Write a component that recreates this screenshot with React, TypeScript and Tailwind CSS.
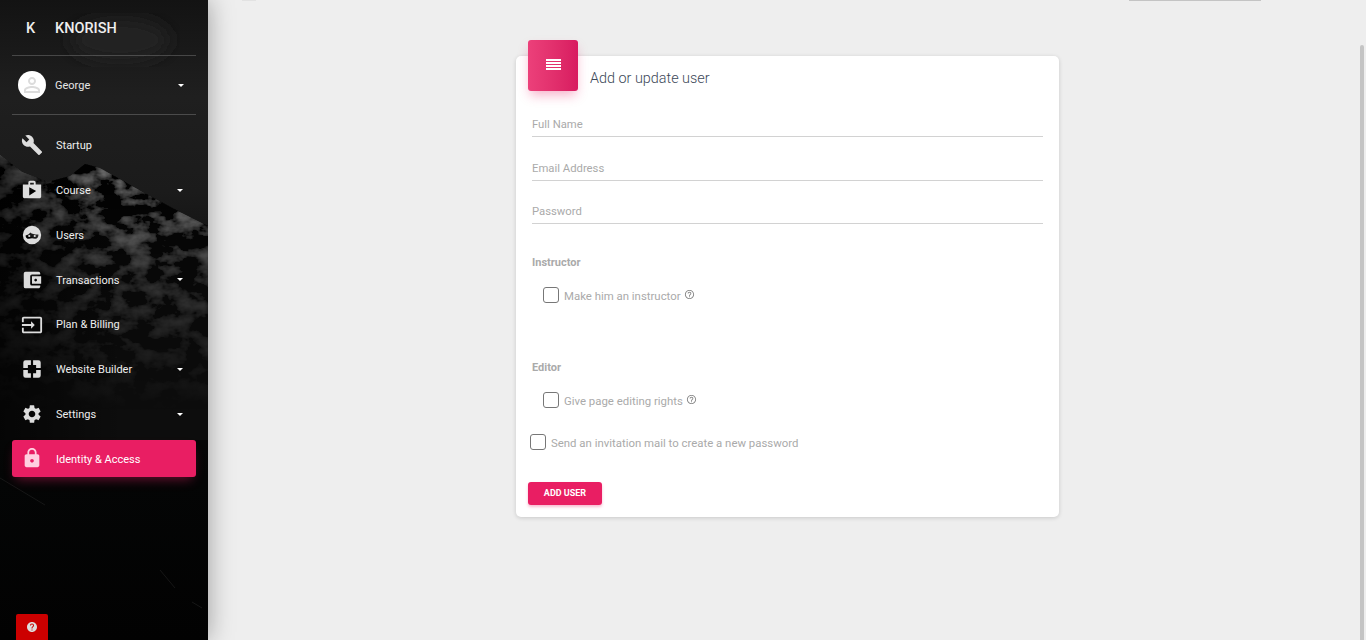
import React from 'react';
import {
  MdBuild,
  MdShop,
  MdAccountBalanceWallet,
  MdInput,
  MdSettings,
  MdLock,
  MdHelp,
  MdHelpOutline,
  MdPersonOutline,
} from 'react-icons/md';

const NAV_ITEMS = [
  { label: 'Startup', icon: <MdBuild size={22} />, caret: false },
  { label: 'Course', icon: <MdShop size={22} />, caret: true },
  { label: 'Users', icon: <FaceIcon />, caret: false },
  { label: 'Transactions', icon: <MdAccountBalanceWallet size={22} />, caret: true },
  { label: 'Plan & Billing', icon: <MdInput size={22} />, caret: false },
  { label: 'Website Builder', icon: <BuilderIcon />, caret: true },
  { label: 'Settings', icon: <MdSettings size={22} />, caret: true },
];

function FaceIcon() {
  return (
    <svg width="22" height="22" viewBox="0 0 24 24" fill="currentColor">
      <path
        fillRule="evenodd"
        d="M12 2a10 10 0 1 0 0 20 10 10 0 0 0 0-20zM5 12.500c2.200-.4 4-1.500 5.200-3.200 1.500 1.500 4.500 2.200 8.800 2.200.3 2.300-1.200 4.700-3.500 4.700-1.300 0-2.500-.6-3.500-.6s-2.200.6-3.500.6C6.500 16.200 5 14.800 5 12.500z"
      />
      <circle cx="9" cy="13.100" r="1.200" />
      <circle cx="15" cy="13.100" r="1.200" />
    </svg>
  );
}

function BuilderIcon() {
  return (
    <svg width="22" height="22" viewBox="0 0 24 24" fill="currentColor">
      <path
        fillRule="evenodd"
        d="M5 2.500h14A2.500 2.500 0 0 1 21.500 5v14a2.500 2.500 0 0 1-2.500 2.500H5A2.500 2.500 0 0 1 2.500 19V5A2.500 2.500 0 0 1 5 2.500zM10.800 2.500v5H7.500v3.300h-5v2.400h5v3.300h3.300v5h2.400v-5h3.300v-3.300h5v-2.400h-5V7.500h-3.300v-5z"
      />
    </svg>
  );
}

function HeadlineIcon() {
  return (
    <svg width="15" height="11" viewBox="0 0 15 11" fill="currentColor" className="-mt-[2px]">
      <rect y="0" width="15" height="2" />
      <rect y="3" width="15" height="2" />
      <rect y="6" width="15" height="2" />
      <rect y="9" width="15" height="2" />
    </svg>
  );
}

function Caret() {
  return <span className="h-0 w-0 border-x-[3px] border-t-[3px] border-x-transparent border-t-white" />;
}

// mountain backdrop behind the sidebar menu
function SidebarBackdrop() {
  const ridge = 'M0 155 L22 172 L48 182 L70 176 L85 164 L100 168 L125 182 L150 196 L180 212 L208 226 V440 H0 Z';
  return (
    <svg className="absolute inset-0 h-full w-full" viewBox="0 0 208 640" preserveAspectRatio="none">
      <defs>
        <linearGradient id="sky" x1="0" y1="0" x2="0" y2="1">
          <stop offset="0" stopColor="#131313" />
          <stop offset="0.15" stopColor="#1f1f1f" />
          <stop offset="0.3" stopColor="#1b1b1b" />
          <stop offset="0.5" stopColor="#090909" />
          <stop offset="0.75" stopColor="#040505" />
          <stop offset="1" stopColor="#020202" />
        </linearGradient>
        <linearGradient id="fade" x1="0" y1="150" x2="0" y2="410" gradientUnits="userSpaceOnUse">
          <stop offset="0" stopColor="#fff" />
          <stop offset="0.5" stopColor="#555" />
          <stop offset="1" stopColor="#000" />
        </linearGradient>
        <linearGradient id="leftShade" x1="0" y1="0" x2="1" y2="0">
          <stop offset="0" stopColor="#000" stopOpacity="0.6" />
          <stop offset="0.6" stopColor="#000" stopOpacity="0" />
        </linearGradient>
        <mask id="rockFade">
          <rect width="208" height="640" fill="url(#fade)" />
        </mask>
        <filter id="rock" x="0" y="0" width="100%" height="100%">
          <feTurbulence type="fractalNoise" baseFrequency="0.04 0.06" numOctaves="4" seed="7" />
          <feColorMatrix values="0 0 0 0.7 -0.32  0 0 0 0.7 -0.32  0 0 0 0.7 -0.32  0 0 0 0 1" />
          <feComposite in2="SourceGraphic" operator="in" />
        </filter>
        <filter id="soft">
          <feGaussianBlur stdDeviation="8" />
        </filter>
        <filter id="edge">
          <feGaussianBlur stdDeviation="0.7" />
        </filter>
      </defs>
      <rect width="208" height="640" fill="url(#sky)" />
      <ellipse cx="120" cy="40" rx="50" ry="22" fill="#212121" filter="url(#soft)" />
      <path d={ridge} fill="#101010" filter="url(#edge)" />
      <g mask="url(#rockFade)">
        <path d={ridge} fill="#000" filter="url(#rock)" />
      </g>
      <path d={ridge} fill="url(#leftShade)" />
      <path d="M0 478 L45 505 M160 570 L175 588 M192 602 L202 608" stroke="#161616" strokeWidth="1" fill="none" />
    </svg>
  );
}

function Sidebar() {
  return (
    <aside className="relative flex h-full w-[208px] shrink-0 flex-col bg-black text-white shadow-[0_0_24px_rgba(0,0,0,0.35)]">
      <SidebarBackdrop />
      <div className="relative flex min-h-0 flex-1 flex-col px-3">
        <div className="flex h-[56px] items-center border-b border-white/20 pl-[14px] pt-[3px] text-[14.5px] font-medium text-[#eeeeee]">
          <span className="w-[29px]">K</span>
          <span>KNORISH</span>
        </div>
        <div className="flex h-[59px] items-center border-b border-white/20 pl-[6px] pr-[12px]">
          <div className="flex h-[28px] w-[28px] items-center justify-center rounded-full bg-white text-[#dcdcdc]">
            <MdPersonOutline size={24} />
          </div>
          <span className="ml-[9px] flex-1 pt-[3px] text-[11px] text-[#e6e6e6]">George</span>
          <Caret />
        </div>
        <nav className="mt-[8px] flex flex-col">
          {NAV_ITEMS.map((item) => (
            <div key={item.label} className="flex h-[44.8px] items-center pl-[9px] pr-[13px] text-[#dddddd]">
              <span className="w-[35px] shrink-0">{item.icon}</span>
              <span className="flex-1 translate-y-[1px] text-[11px] text-[#eeeeee]">{item.label}</span>
              {item.caret && <Caret />}
            </div>
          ))}
          <div className="mt-[3.4px] flex h-[37px] items-center rounded-[3px] bg-[#e91e63] pl-[9px] text-white shadow-[0_6px_12px_-4px_rgba(233,30,99,0.45)]">
            <span className="w-[35px] shrink-0 text-[#ffd0e0]">
              <MdLock size={22} />
            </span>
            <span className="translate-y-[2px] text-[11px]">Identity &amp; Access</span>
          </div>
        </nav>
        <div className="mt-auto ml-[4px] flex h-[26px] w-[32px] items-center justify-center rounded-t-[2px] bg-[#cc0000] text-[#dddddd]">
          <MdHelp size={12} />
        </div>
      </div>
    </aside>
  );
}

function TextField({ label }: { label: string }) {
  return (
    <div className="mx-4 flex h-[26px] items-end border-b border-[#d2d2d2] pb-[5px] text-[11.3px] leading-[13px] text-[#aaaaaa]">
      {label}
    </div>
  );
}

function CheckRow({ label, help, className }: { label: string; help?: boolean; className: string }) {
  return (
    <div className={`flex h-4 items-center text-[11.4px] text-[#aaaaaa] ${className}`}>
      <span className="h-4 w-4 shrink-0 rounded-[3px] border border-[#777777]" />
      <span className="ml-[5px] translate-y-[2px]">{label}</span>
      {help && <MdHelpOutline size={11} className="ml-[3px] -mt-[1px] text-[#888888]" />}
    </div>
  );
}

function UserCard() {
  return (
    <div className="relative ml-[308px] mt-[56px] h-[461px] w-[543px] rounded-[5px] bg-white shadow-[0_1px_4px_rgba(0,0,0,0.16)]">
      <div className="absolute -top-4 left-3 flex h-[51px] w-[50px] items-center justify-center rounded-[3px] bg-gradient-to-r from-[#ec407a] to-[#d81b60] text-white shadow-[0_6px_12px_-2px_rgba(233,30,99,0.35)]">
        <HeadlineIcon />
      </div>
      <h2 className="pl-[74px] pt-[14px] text-[14.4px] font-light leading-[18px] text-[#3c4858]">Add or update user</h2>
      <div className="mt-[23px] flex flex-col gap-[17.5px]">
        <TextField label="Full Name" />
        <TextField label="Email Address" />
        <TextField label="Password" />
      </div>
      <div className="ml-4 mt-[32px] text-[11px] font-bold leading-[14px] text-[#aaaaaa]">Instructor</div>
      <CheckRow label="Make him an instructor" help className="ml-[27px] mt-[17px]" />
      <div className="ml-4 mt-[58px] text-[11px] font-bold leading-[14px] text-[#aaaaaa]">Editor</div>
      <CheckRow label="Give page editing rights" help className="ml-[27px] mt-[17px]" />
      <CheckRow label="Send an invitation mail to create a new password" className="ml-[14px] mt-[26px]" />
      <button className="ml-3 mt-[32px] flex h-[23px] w-[74px] items-center justify-center rounded-[3px] bg-[#e91e63] text-[9px] font-bold text-white shadow-[0_2px_3px_rgba(233,30,99,0.3)]">
        ADD USER
      </button>
    </div>
  );
}

export default function App() {
  return (
    <div className="flex h-[640px] w-[1366px] overflow-hidden bg-[#eeeeee] font-['Roboto',sans-serif]">
      <Sidebar />
      <main className="relative min-w-0 flex-1">
        <div className="absolute left-[34px] top-0 h-px w-[14px] bg-[#e2e2e2]" />
        <div className="absolute left-[921px] top-0 h-px w-[132px] bg-[#c4c4c4]" />
        <div className="absolute right-[2px] top-[45px] bottom-0 w-[4px] rounded-t-sm bg-[#c4c4c4]" />
        <UserCard />
      </main>
    </div>
  );
}
